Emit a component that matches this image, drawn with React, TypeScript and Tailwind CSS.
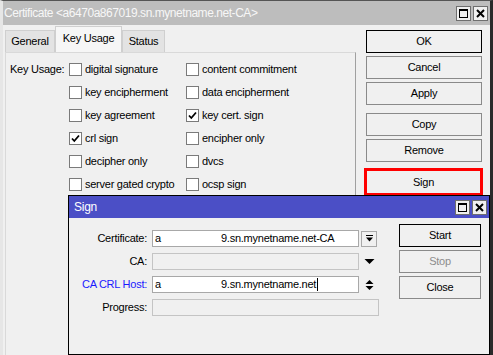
import React from "react";

const Check = () => (
  <svg width="9" height="9" viewBox="0 0 9 9" className="block">
    <path d="M1 4.5 L3.3 7 L8 1.5" stroke="#000" strokeWidth="1.8" fill="none" />
  </svg>
);

function CB({ label, checked }: { label: string; checked?: boolean }) {
  return (
    <div className="flex items-center h-[13px] gap-[3px]">
      <div className="w-[13px] h-[13px] border border-[#7a7a7a] bg-white flex items-center justify-center shrink-0">
        {checked ? <Check /> : null}
      </div>
      <span className="whitespace-nowrap leading-none">{label}</span>
    </div>
  );
}

function Btn({ label, def, dis, cls }: { label: string; def?: boolean; dis?: boolean; cls?: string }) {
  return (
    <div
      className={
        "h-[23px] flex items-center justify-center bg-[#f0f0f0] border " +
        (def ? "border-black " : "border-[#8a8a8a] ") +
        (dis ? "text-[#8d8d8d] " : "text-black ") +
        (cls ?? "")
      }
    >
      {label}
    </div>
  );
}

function TitleBtns() {
  return (
    <div className="flex gap-[2px]">
      <div className="w-[15px] h-[15px] border border-[#6f6f6f] bg-[#f0f0f0] flex items-center justify-center">
        <div className="w-[9px] h-[9px] border border-black border-t-2" />
      </div>
      <div className="w-[15px] h-[15px] border border-[#6f6f6f] bg-[#f0f0f0] flex items-center justify-center">
        <svg width="9" height="9" viewBox="0 0 9 9">
          <path d="M1 1 L8 8 M8 1 L1 8" stroke="#000" strokeWidth="2" />
        </svg>
      </div>
    </div>
  );
}

export default function App() {
  const col1 = [
    { l: "digital signature" },
    { l: "key encipherment" },
    { l: "key agreement" },
    { l: "crl sign", c: true },
    { l: "decipher only" },
    { l: "server gated crypto" },
  ];
  const col2 = [
    { l: "content commitment" },
    { l: "data encipherment" },
    { l: "key cert. sign", c: true },
    { l: "encipher only" },
    { l: "dvcs" },
    { l: "ocsp sign" },
  ];
  return (
    <div
      className="w-[493px] h-[355px] overflow-hidden relative bg-[#f0f0f0] text-[11px] tracking-[-0.25px] text-black"
      style={{ fontFamily: "'Liberation Sans', Arial, sans-serif" }}
    >
      {/* main window */}
      <div className="w-full h-full flex flex-col border-l-[3px] border-l-[#e6e6e6] border-r-[3px] border-r-[#2a2a2a] border-t border-t-[#555]">
        <div className="h-[24px] bg-[#bdbdbd] flex items-center justify-between pl-[1px] pr-[2px] shrink-0">
          <span className="text-[#f7f7f7] text-[12px] tracking-[-0.45px] whitespace-nowrap">
            Certificate &lt;a6470a867019.sn.mynetname.net-CA&gt;
          </span>
          <TitleBtns />
        </div>
        <div className="flex flex-1">
          {/* left side */}
          <div className="w-[353px] pl-[2px] pt-[1px] flex flex-col">
            <div className="flex items-end h-[26px]">
              <div className="w-[50px] h-[22px] bg-[#e3e3e3] border border-[#cfcfcf] border-b-0 flex items-center justify-center">
                General
              </div>
              <div className="w-[67px] h-[26px] bg-[#f6f6f6] border border-[#cfcfcf] border-b-0 flex items-center justify-center pb-[3px]">
                Key Usage
              </div>
              <div className="w-[43px] h-[22px] bg-[#e3e3e3] border border-[#cfcfcf] border-b-0 flex items-center justify-center">
                Status
              </div>
            </div>
            <div className="flex-1 border-t border-t-[#d9d9d9] border-l border-l-[#d9d9d9] border-r border-r-[#a0a0a0] pt-[10px] pl-[4px] flex">
              <div className="w-[59px] h-[13px] flex items-center leading-none">Key Usage:</div>
              <div className="w-[117px] flex flex-col gap-[10px]">
                {col1.map((x) => (
                  <CB key={x.l} label={x.l} checked={x.c} />
                ))}
              </div>
              <div className="flex flex-col gap-[10px]">
                {col2.map((x) => (
                  <CB key={x.l} label={x.l} checked={x.c} />
                ))}
              </div>
            </div>
          </div>
          {/* right buttons */}
          <div className="pl-[10px] pt-[5px] w-[129px] flex flex-col">
            <Btn label="OK" def cls="w-[116px] h-[23px]" />
            <Btn label="Cancel" cls="w-[116px] mt-[3px] h-[23px]" />
            <Btn label="Apply" cls="w-[116px] mt-[3px] h-[23px]" />
            <Btn label="Copy" cls="w-[116px] mt-[8px] h-[23px]" />
            <Btn label="Remove" cls="w-[116px] mt-[3px] h-[23px]" />
            <div className="w-[119px] h-[28px] -ml-[2px] mt-[6px] border-[3px] border-[#ff0000] bg-[#f0f0f0] flex items-center justify-center">
              Sign
            </div>
          </div>
        </div>
      </div>

      {/* Sign dialog */}
      <div className="absolute left-[68px] top-[195px] w-[422px] h-[160px] border border-black bg-[#f0f0f0] flex flex-col">
        <div className="h-[22px] bg-[#4b4fc6] flex items-center justify-between pl-[5px] pr-[2px] shrink-0">
          <span className="text-white text-[12px]">Sign</span>
          <TitleBtns />
        </div>
        <div className="flex">
          <div className="w-[310px] pt-[12px] flex flex-col gap-[6px]">
            {[
              { l: "Certificate:", v: "cert", t: "9.sn.mynetname.net-CA", icon: "dd" },
              { l: "CA:", dis: true, icon: "down" },
              { l: "CA CRL Host:", blue: true, t: "9.sn.mynetname.net", icon: "ud", caret: true },
              { l: "Progress:", dis: true, wide: true },
            ].map((r) => (
              <div key={r.l} className="flex items-center h-[17px]">
                <div className={"w-[79px] text-right pr-[1px] " + (r.blue ? "text-[#1a1aff]" : "")}>{r.l}</div>
                <div
                  className={
                    "ml-[4px] h-[17px] border flex items-center " +
                    (r.wide ? "w-[227px] " : "w-[207px] ") +
                    (r.dis ? "bg-[#f0f0f0] border-[#c4c4c4]" : "bg-white border-[#a8a8a8]")
                  }
                >
                  {r.t ? (
                    <div className="flex items-center pl-[2px] whitespace-nowrap">
                      <span className="w-[66px]">a</span>
                      <span>{r.t}</span>
                      {r.caret ? <span className="w-px h-[13px] bg-black ml-[1px]" /> : null}
                    </div>
                  ) : null}
                </div>
                {r.icon === "dd" ? (
                  <div className="ml-[2px] w-[16px] h-[16px] border border-[#a8a8a8] bg-[#f0f0f0] flex items-center justify-center">
                    <svg width="9" height="9" viewBox="0 0 9 9">
                      <path d="M1 1.5 H8" stroke="#000" strokeWidth="1" />
                      <path d="M1 3.5 H8 L4.5 7.5 Z" fill="#000" />
                    </svg>
                  </div>
                ) : null}
                {r.icon === "down" ? (
                  <div className="ml-[2px] w-[16px] h-[16px] flex items-center justify-center">
                    <svg width="11" height="7" viewBox="0 0 11 7">
                      <path d="M0.5 1 H10.5 L5.5 6 Z" fill="#000" />
                    </svg>
                  </div>
                ) : null}
                {r.icon === "ud" ? (
                  <div className="ml-[2px] w-[16px] h-[16px] flex items-center justify-center">
                    <svg width="9" height="12" viewBox="0 0 9 12">
                      <path d="M0.5 5 L4.5 1 L8.5 5 Z M0.5 7 H8.5 L4.5 11 Z" fill="#000" />
                    </svg>
                  </div>
                ) : null}
              </div>
            ))}
          </div>
          <div className="pl-[20px] pt-[6px] flex flex-col gap-[3px]">
            <Btn label="Start" def cls="w-[82px]" />
            <Btn label="Stop" dis cls="w-[82px]" />
            <Btn label="Close" cls="w-[82px]" />
          </div>
        </div>
      </div>
    </div>
  );
}
